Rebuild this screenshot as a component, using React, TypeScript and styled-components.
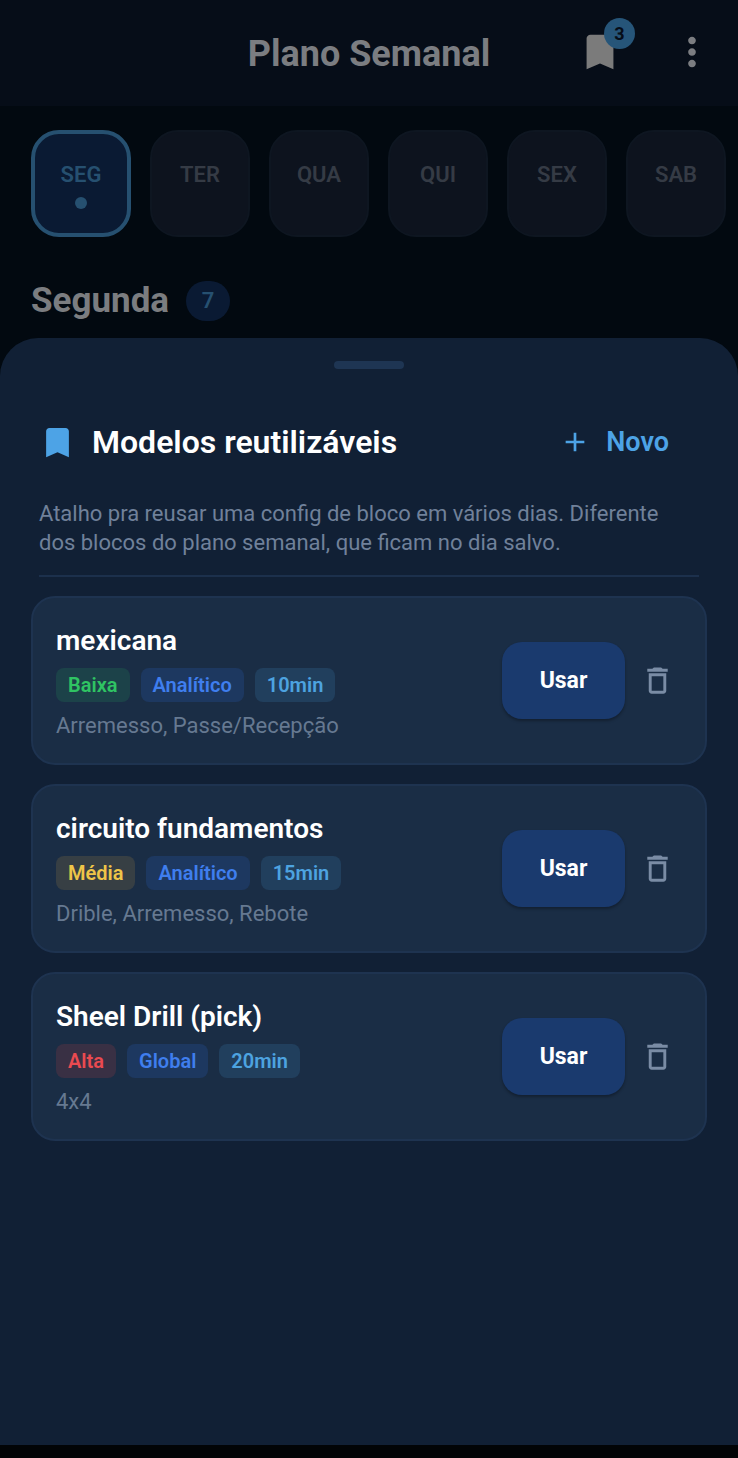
import React from "react";
import styled, { createGlobalStyle } from "styled-components";

const GlobalStyle = createGlobalStyle`
  * { box-sizing: border-box; }
  body {
    margin: 0;
    background: #020910;
    font-family: Roboto, "Liberation Sans", sans-serif;
  }
  h1, h2, h3, p, ul { margin: 0; padding: 0; }
  ul { list-style: none; }
  button {
    border: 0;
    padding: 0;
    background: none;
    font-family: inherit;
    cursor: pointer;
  }
`;

const Page = styled.div`
  display: flex;
  flex-direction: column;
  min-height: 100vh;
  border-bottom: 13px solid #020406;
`;

const TopBar = styled.header`
  display: grid;
  grid-template-columns: 1fr auto 1fr;
  align-items: center;
  height: 106px;
  background: #060d18;
`;

const ScreenTitle = styled.h1`
  grid-column: 2;
  padding-top: 2px;
  color: #7b7d81;
  font-size: 36px;
  font-weight: 700;
  line-height: 42px;
`;

const Actions = styled.div`
  display: flex;
  justify-content: flex-end;
  gap: 46px;
  padding: 0 23px 2px 0;
`;

const IconButton = styled.button<{ $color: string }>`
  position: relative;
  display: flex;
  color: ${(p) => p.$color};
`;

const CountBadge = styled.span`
  position: absolute;
  top: -11px;
  right: -12px;
  width: 31px;
  height: 31px;
  border-radius: 50%;
  background: #265579;
  color: #060d18;
  font-size: 18px;
  font-weight: 700;
  line-height: 31px;
  text-align: center;
`;

const Days = styled.nav`
  display: flex;
  gap: 19px;
  padding: 24px 0 0 31px;
  overflow: hidden;
`;

const Day = styled.button<{ $active?: boolean }>`
  display: flex;
  flex: 0 0 100px;
  flex-direction: column;
  align-items: center;
  gap: 10px;
  height: 107px;
  padding-top: ${(p) => (p.$active ? 29 : 31)}px;
  border: ${(p) => (p.$active ? "4px solid #265070" : "2px solid #0e1621")};
  border-radius: 28px;
  background: ${(p) => (p.$active ? "#0a1a33" : "#0d131e")};
  color: ${(p) => (p.$active ? "#265070" : "#353b45")};
  font-size: 22px;
  font-weight: 600;
  line-height: 24px;
`;

const Dot = styled.span`
  width: 12px;
  height: 12px;
  border-radius: 50%;
  background: #265070;
`;

const DayHeading = styled.div`
  display: flex;
  align-items: center;
  gap: 17px;
  padding: 44px 31px 17px;
`;

const DayTitle = styled.h2`
  color: #7b7d80;
  font-size: 35px;
  font-weight: 700;
  line-height: 40px;
`;

const DayCount = styled.span`
  width: 44px;
  border-radius: 20px;
  background: #0a1a33;
  color: #265070;
  font-size: 22px;
  font-weight: 600;
  line-height: 40px;
  text-align: center;
`;

const Sheet = styled.section`
  flex: 1;
  padding: 23px 31px;
  border-radius: 38px 38px 0 0;
  background: #112035;
`;

const Handle = styled.div`
  width: 70px;
  height: 8px;
  margin: 0 auto;
  border-radius: 4px;
  background: #1e3553;
`;

const SheetHeader = styled.div`
  display: flex;
  align-items: center;
  gap: 15px;
  margin-top: 50px;
  padding: 0 38px 0 7px;
  color: #4da3e6;
`;

const SheetTitle = styled.h2`
  flex: 1;
  color: #fff;
  font-size: 32px;
  font-weight: 600;
  line-height: 46px;
`;

const NewButton = styled.button`
  display: flex;
  align-items: center;
  gap: 15px;
  color: #4da3e6;
  font-size: 27px;
  font-weight: 600;
  line-height: 46px;
`;

const Description = styled.p`
  margin: 34px 8px 0;
  padding: 0 28px 18px 0;
  color: #70819a;
  font-size: 22px;
  line-height: 29px;
`;

const Divider = styled.hr`
  height: 2px;
  margin: 0 8px 19px;
  border: 0;
  background: #1c304c;
`;

const Templates = styled.ul`
  display: flex;
  flex-direction: column;
  gap: 19px;
`;

const Card = styled.li`
  display: flex;
  align-items: center;
  min-height: 169px;
  padding: 0 30px 0 23px;
  border: 2px solid #1e3350;
  border-radius: 24px;
  background: #1a2d45;
`;

const Info = styled.div`
  flex: 1;
  padding-top: 4px;
`;

const Name = styled.h3`
  color: #fff;
  font-size: 28px;
  font-weight: 600;
  line-height: 32px;
`;

const Tags = styled.div`
  display: flex;
  gap: 11px;
  margin: 11px 0 10px;
`;

const Tag = styled.span<{ $color: string; $background: string }>`
  padding: 0 12px;
  border-radius: 8px;
  background: ${(p) => p.$background};
  color: ${(p) => p.$color};
  font-size: 20px;
  font-weight: 600;
  line-height: 34px;
`;

const Skills = styled.p`
  color: #667991;
  font-size: 22px;
  line-height: 28px;
`;

const UseButton = styled.button`
  width: 123px;
  height: 77px;
  margin-right: 15px;
  border-radius: 20px;
  background: #1a3a6e;
  box-shadow: 0 2px 3px rgba(0, 0, 0, 0.3);
  color: #fff;
  font-size: 23px;
  font-weight: 700;
`;

const Icon = ({ size, path }: { size: number; path: string }) => (
  <svg width={size} height={size} viewBox="0 0 24 24" fill="currentColor" aria-hidden="true">
    <path d={path} />
  </svg>
);

const icons = {
  bookmark: "M17 3H7c-1.1 0-2 .9-2 2v16l7-3 7 3V5c0-1.1-.9-2-2-2z",
  more: "M12 8c1.1 0 2-.9 2-2s-.9-2-2-2-2 .9-2 2 .9 2 2 2zm0 2c-1.1 0-2 .9-2 2s.9 2 2 2 2-.9 2-2-.9-2-2-2zm0 6c-1.1 0-2 .9-2 2s.9 2 2 2 2-.9 2-2-.9-2-2-2z",
  add: "M19 13h-6v6h-2v-6H5v-2h6V5h2v6h6v2z",
  trash: "M6 19c0 1.1.9 2 2 2h8c1.1 0 2-.9 2-2V7H6v12zM8 9h8v10H8V9zm7.5-5l-1-1h-5l-1 1H5v2h14V4z",
};

const palette = {
  Baixa: { $color: "#2fc463", $background: "#1c4249" },
  Média: { $color: "#efc548", $background: "#373f44" },
  Alta: { $color: "#ea4a50", $background: "#393044" },
  type: { $color: "#3f7eee", $background: "#1d3860" },
  time: { $color: "#4da3e0", $background: "#213f5d" },
};

type Level = "Baixa" | "Média" | "Alta";

const templates: { name: string; level: Level; type: string; time: string; skills: string }[] = [
  { name: "mexicana", level: "Baixa", type: "Analítico", time: "10min", skills: "Arremesso, Passe/Recepção" },
  { name: "circuito fundamentos", level: "Média", type: "Analítico", time: "15min", skills: "Drible, Arremesso, Rebote" },
  { name: "Sheel Drill (pick)", level: "Alta", type: "Global", time: "20min", skills: "4x4" },
];

export default function App() {
  return (
    <>
      <GlobalStyle />
      <Page>
        <TopBar>
          <ScreenTitle>Plano Semanal</ScreenTitle>
          <Actions>
            <IconButton $color="#7b7b7b" aria-label="Modelos">
              <Icon size={46} path={icons.bookmark} />
              <CountBadge>3</CountBadge>
            </IconButton>
            <IconButton $color="#7b7d81" aria-label="Mais opções">
              <Icon size={46} path={icons.more} />
            </IconButton>
          </Actions>
        </TopBar>
        <Days>
          {["SEG", "TER", "QUA", "QUI", "SEX", "SAB"].map((day, i) => (
            <Day key={day} $active={i === 0}>
              {day}
              {i === 0 && <Dot />}
            </Day>
          ))}
        </Days>
        <DayHeading>
          <DayTitle>Segunda</DayTitle>
          <DayCount>7</DayCount>
        </DayHeading>
        <Sheet>
          <Handle />
          <SheetHeader>
            <Icon size={39} path={icons.bookmark} />
            <SheetTitle>Modelos reutilizáveis</SheetTitle>
            <NewButton>
              <Icon size={32} path={icons.add} />
              Novo
            </NewButton>
          </SheetHeader>
          <Description>
            Atalho pra reusar uma config de bloco em vários dias. Diferente dos blocos do plano
            semanal, que ficam no dia salvo.
          </Description>
          <Divider />
          <Templates>
            {templates.map((t) => (
              <Card key={t.name}>
                <Info>
                  <Name>{t.name}</Name>
                  <Tags>
                    <Tag {...palette[t.level]}>{t.level}</Tag>
                    <Tag {...palette.type}>{t.type}</Tag>
                    <Tag {...palette.time}>{t.time}</Tag>
                  </Tags>
                  <Skills>{t.skills}</Skills>
                </Info>
                <UseButton>Usar</UseButton>
                <IconButton $color="#7a8ca5" aria-label={`Excluir ${t.name}`}>
                  <Icon size={35} path={icons.trash} />
                </IconButton>
              </Card>
            ))}
          </Templates>
        </Sheet>
      </Page>
    </>
  );
}
